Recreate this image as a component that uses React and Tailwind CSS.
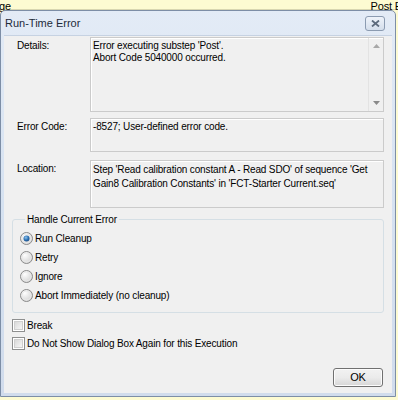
import React from "react";

function Radio({ checked }) {
  return (
    <svg width="13" height="13" viewBox="0 0 13 13" className="shrink-0">
      <defs>
        <radialGradient id="rg" cx="0.35" cy="0.3" r="0.8">
          <stop offset="0" stopColor="#ffffff" />
          <stop offset="1" stopColor="#cfcfcf" />
        </radialGradient>
        <radialGradient id="dot" cx="0.4" cy="0.35" r="0.7">
          <stop offset="0" stopColor="#8fc3ec" />
          <stop offset="0.6" stopColor="#2a6fb2" />
          <stop offset="1" stopColor="#1b4c84" />
        </radialGradient>
      </defs>
      <circle cx="6.5" cy="6.5" r="6" fill="url(#rg)" stroke="#8b8b8b" strokeWidth="1" />
      <circle cx="6.5" cy="6.5" r="4.5" fill="none" stroke="#e9e9e9" strokeWidth="1" />
      {checked && <circle cx="6.5" cy="6.5" r="3" fill="url(#dot)" />}
    </svg>
  );
}

function Check() {
  return (
    <div className="w-[13px] h-[13px] shrink-0 border border-[#8e8f8f] bg-white p-[1px]">
      <div className="w-full h-full border border-[#cfcfcf] bg-gradient-to-br from-[#d9d9d9] to-[#f6f6f6]" />
    </div>
  );
}

function Row({ label, h, children, scroll }) {
  return (
    <div className="flex">
      <div className="w-[73px] shrink-0 pt-[2px] leading-[13px]">{label}</div>
      <div
        className={`flex-1 flex border border-[#cbcbcb] bg-[#f0f0f0] shadow-[inset_1px_1px_0_#ffffff]`}
        style={{ height: h }}
      >
        <div className="flex-1 pl-[2px] pt-[2px] leading-[12px]">{children}</div>
        {scroll && (
          <div className="w-[15px] border-l border-[#e3e3e3] flex flex-col items-center justify-between pt-[6px] pb-[6px]">
            <svg width="7" height="4" viewBox="0 0 7 4"><path d="M0 4 L3.5 0 L7 4 Z" fill="#a8a8a8" /></svg>
            <svg width="7" height="4" viewBox="0 0 7 4"><path d="M0 0 L3.5 4 L7 0 Z" fill="#8a8a8a" /></svg>
          </div>
        )}
      </div>
    </div>
  );
}

export default function App() {
  return (
    <div
      className="w-[398px] h-[400px] bg-[#fdfbd2] overflow-hidden text-black text-[10px] tracking-[-0.15px]"
      style={{ fontFamily: '"Liberation Sans", Arial, sans-serif' }}
    >
      <div className="h-[10px] flex justify-between items-end leading-[10px] border-b border-[#d8d6b0] text-[11px]">
        <span className="-mb-[2px] -ml-[1px]">ge</span>
        <span className="-mb-[2px] -mr-[4px]">Post E</span>
      </div>
      <div className="flex">
        <div className="w-[396px] h-[387px] border border-[#7d8ea6] rounded-t-[5px] bg-gradient-to-b from-[#e3ebf6] via-[#d6e2f1] to-[#d1dcec] flex flex-col">
          <div className="h-[24px] flex items-center justify-between pl-[4px] pr-[10px]">
            <span className="text-[11px] text-[#1d2a3a] tracking-normal">Run-Time Error</span>
            <div className="w-[20px] h-[15px] rounded-[3px] border border-[#8b9bb1] bg-gradient-to-b from-[#eef3fa] to-[#d4deeb] flex items-center justify-center">
              <svg width="9" height="7" viewBox="0 0 9 7">
                <path d="M1 0.5 L8 6.5 M8 0.5 L1 6.5" stroke="#5d6b7d" strokeWidth="1.8" />
              </svg>
            </div>
          </div>
          <div className="mx-[3px] h-[358px] bg-[#f0f0f0] border-t border-[#c6d2e2] pl-[13px] pr-[8px] pt-[1px] flex flex-col">
            <Row label="Details:" h={75} scroll>
              <div>Error executing substep 'Post'.</div>
              <div>Abort Code 5040000 occurred.</div>
            </Row>
            <div className="h-[6px]" />
            <Row label="Error Code:" h={34}>
              <div>-8527; User-defined error code.</div>
            </Row>
            <div className="h-[8px]" />
            <Row label="Location:" h={48}>
              <div className="leading-[14px]">
                Step 'Read calibration constant A - Read SDO' of sequence 'Get
                <br />
                Gain8 Calibration Constants' in 'FCT-Starter Current.seq'
              </div>
            </Row>
            <fieldset className="mt-[5px] -ml-[5px] h-[100px] border border-[#d5dfe5] rounded-[3px] pl-[7px] pt-[3px]">
              <legend className="ml-[5px] px-[2px] leading-[13px]">Handle Current Error</legend>
              {[
                ["Run Cleanup", true],
                ["Retry", false],
                ["Ignore", false],
                ["Abort Immediately (no cleanup)", false],
              ].map(([t, c]) => (
                <div key={t} className="h-[19px] flex items-center gap-[2px]">
                  <Radio checked={c} />
                  <span>{t}</span>
                </div>
              ))}
            </fieldset>
            <div className="mt-[3px] -ml-[5px]">
              {["Break", "Do Not Show Dialog Box Again for this Execution"].map((t) => (
                <div key={t} className="h-[18px] flex items-center gap-[2px]">
                  <Check />
                  <span>{t}</span>
                </div>
              ))}
            </div>
            <div className="mt-[16px] flex justify-end pr-[1px]">
              <div className="w-[50px] h-[19px] rounded-[3px] border border-[#707070] bg-gradient-to-b from-[#f2f2f2] via-[#ebebeb] to-[#d6d6d6] shadow-[inset_0_0_0_1px_#fcfcfc] flex items-center justify-center text-[11px]">
                OK
              </div>
            </div>
          </div>
        </div>
        <div className="flex-1" />
      </div>
    </div>
  );
}
